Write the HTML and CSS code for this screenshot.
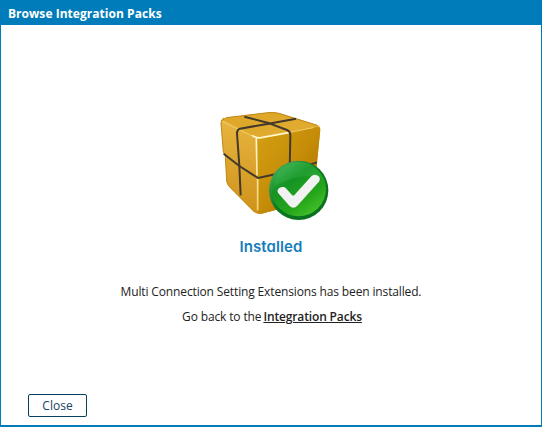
FILE: index.html
```html
<!DOCTYPE html>
<html lang="en">
<head>
<meta charset="utf-8">
<title>Browse Integration Packs</title>
<link rel="stylesheet" href="styles.css">
</head>
<body>
<section class="dialog">
  <header class="dialog-title">Browse Integration Packs</header>
  <main class="content">
    <svg class="package" viewBox="0 0 390 390" aria-hidden="true">
      <defs>
        <linearGradient id="top" x1="0" y1="0" x2="1" y2="1"><stop offset="0" stop-color="#dca526"/><stop offset="1" stop-color="#e3ae35"/></linearGradient>
        <linearGradient id="left" x1="0" y1="0" x2="0" y2="1"><stop offset="0" stop-color="#e7b43f"/><stop offset="1" stop-color="#cf931b"/></linearGradient>
        <linearGradient id="right" x1="0" y1="0" x2="1" y2="1"><stop offset="0" stop-color="#d5a013"/><stop offset=".5" stop-color="#c58d08"/><stop offset="1" stop-color="#a66b00"/></linearGradient>
        <linearGradient id="badge" x1=".1" y1="0" x2=".8" y2="1"><stop offset="0" stop-color="#45b75b"/><stop offset=".35" stop-color="#159325"/><stop offset=".7" stop-color="#25a51b"/><stop offset="1" stop-color="#49c42b"/></linearGradient>
        <linearGradient id="rim" x1="0" y1="0" x2="1" y2="1"><stop offset="0" stop-color="#55b76c"/><stop offset=".45" stop-color="#0b7a22"/><stop offset="1" stop-color="#086a20"/></linearGradient>
        <linearGradient id="edge" gradientUnits="userSpaceOnUse" x1="140" y1="117" x2="143" y2="329"><stop offset="0" stop-color="#fffbe0"/><stop offset="1" stop-color="#f5d06c"/></linearGradient>
      </defs>
      <path d="M42 54 Q33 58 33 70 L40 156 L46 168 L50 243 Q51 254 59 261 L134 337 Q143 345 155 341 L310 300 L321 188 L331 91 Q332 79 321 75 L207 40 Q190 35 172 38 Z" fill="#c98f16"/>
      <path d="M38 60 Q40 55 48 53 L174 38 Q190 36 207 40 L322 76 Q329 79 326 84 L146 116 Q138 117 131 111 Z" fill="url(#top)"/>
      <path d="M34 66 Q36 58 46 63 L131 108 Q140 113 140 123 L143 331 Q141 341 132 334 L58 260 Q51 253 50 243 L46 168 L40 156 Z" fill="url(#left)"/>
      <path d="M140 122 Q141 114 151 113 L318 82 Q331 80 330 94 L321 188 L308 300 L154 341 Q143 341 143 331 Z" fill="url(#right)"/>
      <path d="M36 64 L131 110" class="shine soft"/>
      <path d="M128 107 Q139 116 154 113 L240 97" class="shine"/>
      <path d="M240 97 L310 83" class="shine soft"/>
      <path d="M139 117 L141 225 M143 238 L143 329" stroke="url(#edge)" stroke-width="5" fill="none" stroke-linecap="round"/>
      <path d="M42 54 Q33 58 33 70 L40 156 L46 168 L50 243 Q51 254 59 261 L134 337" class="outline"/>
      <path d="M48 53 L174 38 Q190 36 207 40 L322 76" class="outline"/>
      <path d="M41 161 L88 198 L144 234 L240 213 L321 187" class="strap"/>
      <path d="M103 50 L178 70 L231 90 Q241 94 241 105 L239 214" class="strap"/>
      <path d="M258 56 L176 71 L90 86 Q81 89 81 100 L88 197 L92 286" class="strap"/>
      <circle cx="266" cy="271" r="89" fill="url(#rim)"/>
      <circle cx="266" cy="267" r="82" fill="url(#badge)"/>
      <path d="M194 258 Q196 203 248 187 Q310 178 337 233 Q272 216 194 258" fill="#61cf74" opacity=".17"/>
      <path d="M203 271 Q205 264 213 262 L219 261 Q225 260 229 266 L246 285 Q250 289 254 284 L304 229 Q310 223 318 225 L325 228 Q332 233 328 244 L262 317 Q250 329 238 317 L205 280 Q201 276 203 271 Z" fill="#f2f2f3"/>
    </svg>
    <h1>Installed</h1>
    <p class="message">Multi Connection Setting Extensions has been installed.</p>
    <p class="return">Go back to the<a href="#">Integration Packs</a></p>
  </main>
  <footer><button type="button">Close</button></footer>
</section>
</body>
</html>
```

FILE: styles.css
```css
* { box-sizing: border-box; }
body { margin: 0; background: #fff; font-family: "Open Sans", sans-serif; color: #222; }
.dialog { height: 427px; display: flex; flex-direction: column; border: 1px solid #007cba; border-top: 0; border-bottom-width: 2px; }
.dialog-title { height: 25px; padding: 5px 7px 2px; background: #007cba; color: #fff; font-size: 12px; font-weight: 700; line-height: 18px; letter-spacing: 0.04px; }
.content { flex: 1; display: flex; flex-direction: column; align-items: center; padding-top: 75px; }
.package { width: 130px; height: 130px; margin-left: 8px; }
.shine { fill: none; stroke: #fff7cc; stroke-width: 5; stroke-linecap: round; }
.soft { stroke: #f2ce68; stroke-width: 3; }
.outline { fill: none; stroke: #c18a1c; stroke-width: 3; }
.strap { fill: none; stroke: #42392a; stroke-width: 6; stroke-linejoin: round; }
h1 { margin: 6px 0 0; color: #167dba; font-family: Inter, sans-serif; font-feature-settings: "cv11"; font-size: 15px; font-weight: 600; line-height: 22px; letter-spacing: 0.1px; }
p { margin: 0; font-size: 12px; line-height: 18px; letter-spacing: -0.14px; }
.message { margin-top: 25px; }
.return { margin-top: 7px; padding-left: 2px; }
a { margin-left: 2px; color: #222; font-weight: 600; text-decoration: underline; }
footer { padding: 0 27px 8px; display: flex; }
button { width: 59px; height: 23px; padding: 1px 0 0; border: 1px solid #073f61; border-radius: 2px; background: #fff; color: #17415e; font: 12px/20px "Open Sans", sans-serif; }
```
